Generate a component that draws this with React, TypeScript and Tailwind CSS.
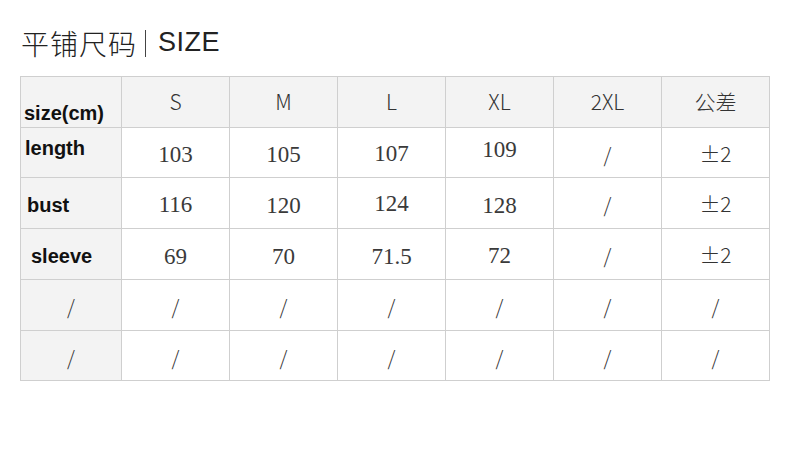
import React from 'react';

const headers = ['S', 'M', 'L', 'XL', '2XL', '公差'];

type Row = {
  label: string;
  labelClass: string;
  values: { v: string; cls?: string }[];
  h: string;
};

const rows: Row[] = [
  {
    label: 'length',
    labelClass: 'items-start pt-[10px] pl-[4px]',
    h: 'h-[50px]',
    values: [
      { v: '103', cls: 'pt-[6px]' },
      { v: '105', cls: 'pt-[6px]' },
      { v: '107', cls: 'pt-[4px]' },
      { v: '109', cls: '-mt-[4px]' },
    ],
  },
  {
    label: 'bust',
    labelClass: 'items-center pt-[4px] pl-[6px]',
    h: 'h-[51px]',
    values: [
      { v: '116', cls: 'pt-[4px]' },
      { v: '120', cls: 'pt-[6px]' },
      { v: '124', cls: 'pt-[2px]' },
      { v: '128', cls: 'pt-[6px]' },
    ],
  },
  {
    label: 'sleeve',
    labelClass: 'items-center pt-[4px] pl-[10px]',
    h: 'h-[51px]',
    values: [
      { v: '69', cls: 'pt-[6px]' },
      { v: '70', cls: 'pt-[6px]' },
      { v: '71.5', cls: 'pt-[6px]' },
      { v: '72', cls: 'pt-[4px]' },
    ],
  },
];

const sans = "font-['Noto_Sans_CJK_SC','Noto_Sans',sans-serif]";
const serif = "font-['Liberation_Serif',serif]";

function Slash() {
  return <span className={`${sans} font-light text-[20px] text-[#333] pt-[4px]`}>/</span>;
}

export default function App() {
  return (
    <div className="w-[790px] h-[476px] bg-white relative overflow-hidden">
      <div className="pl-[21px] pt-[28px] flex items-center text-[#222]">
        <span className={`${sans} font-light text-[28px] leading-none tracking-[1px]`}>平铺尺码</span>
        <span className="w-px h-[27px] bg-[#444] ml-[8px] mr-[12px] mt-[2px]" />
        <span className="font-['Liberation_Sans',sans-serif] text-[27px] leading-none tracking-[0.5px]">SIZE</span>
      </div>

      <div className="absolute left-[20px] top-[76px] border-l border-t border-[#cfcfcf] grid grid-cols-[101px_repeat(6,108px)]">
        {/* header row */}
        <div className="h-[51px] bg-[#f3f3f3] border-r border-b border-[#cfcfcf] flex items-end pl-[3px] pb-[1px]">
          <span className="font-['Liberation_Sans',sans-serif] font-bold text-[20px] text-[#111] leading-tight">size(cm)</span>
        </div>
        {headers.map((h) => (
          <div
            key={h}
            className="h-[51px] bg-[#f3f3f3] border-r border-b border-[#cfcfcf] flex items-center justify-center"
          >
            <span className={`${sans} font-light text-[21px] text-[#333]`}>{h}</span>
          </div>
        ))}

        {rows.map((r) => (
          <React.Fragment key={r.label}>
            <div className={`${r.h} bg-[#f3f3f3] border-r border-b border-[#cfcfcf] flex ${r.labelClass}`}>
              <span className="font-['Liberation_Sans',sans-serif] font-bold text-[20px] text-[#111] leading-none">
                {r.label}
              </span>
            </div>
            {r.values.map((c, i) => (
              <div
                key={i}
                className={`${r.h} border-r border-b border-[#cfcfcf] flex items-center justify-center`}
              >
                <span className={`${serif} text-[23px] text-[#3a3a3a] ${c.cls}`}>{c.v}</span>
              </div>
            ))}
            <div className={`${r.h} border-r border-b border-[#cfcfcf] flex items-center justify-center`}>
              <Slash />
            </div>
            <div className={`${r.h} border-r border-b border-[#cfcfcf] flex items-center justify-center`}>
              <span className={`${sans} font-light text-[21px] text-[#333] pt-[2px]`}>±2</span>
            </div>
          </React.Fragment>
        ))}

        {[0, 1].map((k) => (
          <React.Fragment key={k}>
            {Array.from({ length: 7 }).map((_, i) => (
              <div
                key={i}
                className={`${k === 0 ? 'h-[51px]' : 'h-[50px]'} border-r border-b border-[#cfcfcf] flex items-center justify-center ${
                  i === 0 ? 'bg-[#f3f3f3]' : ''
                }`}
              >
                <Slash />
              </div>
            ))}
          </React.Fragment>
        ))}
      </div>
    </div>
  );
}
